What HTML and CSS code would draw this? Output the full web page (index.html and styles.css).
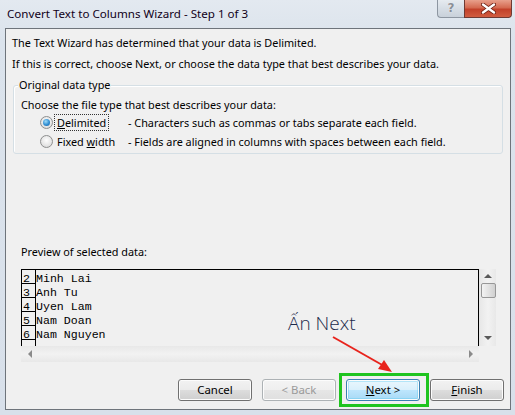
FILE: index.html
```html
<!DOCTYPE html>
<html>
<head>
<meta charset="utf-8">
<link rel="stylesheet" href="styles.css">
</head>
<body>
<div class="window">
  <div class="titlebar">
    <div class="title">Convert Text to Columns Wizard - Step 1 of 3</div>
    <div class="controls">
      <div class="btn-help">?</div>
      <div class="btn-close">
        <svg width="15" height="11" viewBox="0 0 15 11"><path d="M2 1.5 L13 9.5 M13 1.5 L2 9.5" stroke="#6b1d10" stroke-width="4" stroke-linecap="round"/><path d="M2 1.5 L13 9.5 M13 1.5 L2 9.5" stroke="#fff" stroke-width="2.4" stroke-linecap="round"/></svg>
      </div>
    </div>
  </div>
  <div class="client">
    <p class="msg first">The Text Wizard has determined that your data is Delimited.</p>
    <p class="msg">If this is correct, choose Next, or choose the data type that best describes your data.</p>
    <div class="group">
      <div class="legend">Original data type</div>
      <p class="choose">Choose the file type that best describes your data:</p>
      <div class="opt">
        <span class="radio checked"></span>
        <span class="lbl-cell"><span class="lbl focus"><u>D</u>elimited</span></span>
        <span class="desc">- Characters such as commas or tabs separate each field.</span>
      </div>
      <div class="opt">
        <span class="radio"></span>
        <span class="lbl-cell"><span class="lbl">Fixed <u>w</u>idth</span></span>
        <span class="desc">- Fields are aligned in columns with spaces between each field.</span>
      </div>
    </div>
    <p class="preview-label">Preview of selected data:</p>
    <div class="preview">
      <div class="data">
        <div class="row"><span class="num">2</span><span class="val">Minh Lai</span></div>
        <div class="row"><span class="num">3</span><span class="val">Anh Tu</span></div>
        <div class="row"><span class="num">4</span><span class="val">Uyen Lam</span></div>
        <div class="row"><span class="num">5</span><span class="val">Nam Doan</span></div>
        <div class="row"><span class="num">6</span><span class="val">Nam Nguyen</span></div>
        <div class="row"><span class="num"></span><span class="val"></span></div>
      </div>
      <div class="vscroll">
        <span class="arr up"></span>
        <span class="thumb"></span>
        <span class="arr down"></span>
      </div>
      <div class="hscroll">
        <span class="arr left"></span>
        <span class="arr right"></span>
      </div>
      <div class="corner"></div>
    </div>
    <div class="buttons">
      <div class="btn">Cancel</div>
      <div class="btn disabled">&lt; Back</div>
      <div class="btn default"><u>N</u>ext &gt;</div>
      <div class="btn"><u>F</u>inish</div>
    </div>
  </div>
  <div class="note">Ấn Next</div>
  <svg class="arrow" width="515" height="415" viewBox="0 0 515 415">
    <line x1="333" y1="337" x2="384" y2="366" stroke="#e8231c" stroke-width="2"/>
    <polygon points="392,372 378,369 384,360" fill="#e8231c"/>
  </svg>
  <div class="highlight"></div>
</div>
</body>
</html>
```

FILE: styles.css
```css
* { box-sizing: border-box; }
html, body { margin: 0; padding: 0; }
body {
  width: 515px;
  height: 415px;
  overflow: hidden;
  font-family: "Noto Sans", "Open Sans", sans-serif;
  font-size: 10.85px;
  color: #000;
}
.window {
  position: relative;
  width: 515px;
  height: 415px;
  background: linear-gradient(#e3e9f0, #dbe3ec 40px, #d8e0ea);
}
.titlebar {
  height: 28px;
  display: flex;
  justify-content: space-between;
  align-items: flex-start;
}
.title {
  padding: 6px 0 0 7px;
  font-size: 11.6px;
  line-height: 16px;
  color: #100018;
}
.controls {
  display: flex;
  margin-right: 3px;
}
.btn-help {
  width: 27px;
  height: 18px;
  border: 1px solid #8d96a1;
  border-top: none;
  border-right: none;
  border-radius: 0 0 0 4px;
  background: linear-gradient(#e6ebf0, #d6dde5 50%, #c9d1da);
  color: #8a8f96;
  font-family: "DejaVu Sans", sans-serif;
  font-weight: bold;
  font-size: 12px;
  line-height: 17px;
  text-align: center;
  text-shadow: 0 0 1px #fff;
}
.btn-close {
  width: 48px;
  height: 18px;
  border: 1px solid #6f3a33;
  border-top: none;
  border-radius: 0 0 4px 0;
  background: linear-gradient(#e8a08c, #d46a51 45%, #c2412a 55%, #d15c40);
  display: flex;
  align-items: center;
  justify-content: center;
}
.client {
  margin: 0 4px 0 5px;
  height: 382px;
  border: 1px solid #6e747b;
  background: #f0f0f0;
}
.msg {
  margin: 5px 0 0 6px;
  line-height: 16px;
  white-space: nowrap;
}
.msg.first { margin-top: 6px; }
.group {
  margin: 13px 7px 0 7px;
  height: 69px;
  border: 1px solid #d5dfe5;
  border-radius: 3px;
  box-shadow: inset 1px 1px 0 #fff;
}
.legend {
  display: table;
  margin: -9px 0 0 4px;
  padding: 0 1px;
  line-height: 16px;
  background: #f0f0f0;
}
.choose {
  margin: 4px 0 0 7px;
  line-height: 16px;
}
.opt {
  display: flex;
  align-items: center;
  height: 19px;
}
.radio {
  width: 13px;
  height: 13px;
  margin-left: 26px;
  border-radius: 50%;
  border: 1px solid #8e8f8f;
  background: radial-gradient(circle at 50% 40%, #fdfdfd, #e5e5e5 60%, #d2d2d2);
  position: relative;
  flex: none;
}
.radio.checked::after {
  content: "";
  position: absolute;
  left: 2px;
  top: 2px;
  width: 7px;
  height: 7px;
  border-radius: 50%;
  background: radial-gradient(circle at 40% 35%, #9fdcf9, #2f8dd2 55%, #1d5f9b);
}
.lbl-cell {
  width: 75px;
  flex: none;
  padding-left: 1px;
}
.lbl {
  display: inline-block;
  padding: 0 2px;
  line-height: 15px;
  border: 1px solid transparent;
  white-space: nowrap;
}
.lbl.focus {
  border: 1px dotted #333;
}
.desc {
  white-space: nowrap;
}
.preview-label {
  margin: 90px 0 0 15px;
  line-height: 16px;
}
.preview {
  margin: 9px 0 0 15px;
  width: 475px;
  display: grid;
  grid-template-columns: 458px 17px;
  grid-template-rows: 77px 16px;
}
.data {
  border: 1px solid #000;
  border-bottom: none;
  overflow: hidden;
  font-family: "Liberation Mono", "Courier New", monospace;
  font-size: 11.6px;
  background: #f0f0f0;
}
.row {
  display: flex;
  height: 14px;
}
.num, .val {
  height: 14px;
  padding-top: 5px;
  line-height: 8px;
}
.num {
  width: 14px;
  flex: none;
  border-right: 1px solid #000;
  border-bottom: 1px solid #000;
  text-align: right;
  padding-right: 5px;
}
.val {
  white-space: pre;
}
.vscroll {
  display: flex;
  flex-direction: column;
  align-items: center;
  background: linear-gradient(90deg, #e8e8e8, #f2f2f2 50%, #e8e8e8);
  border-left: 1px solid #e6e6e6;
}
.arr {
  width: 0;
  height: 0;
  border: 4px solid transparent;
}
.arr.up {
  margin-top: 5px;
  border-bottom: 4px solid #5a5a5a;
  border-top-width: 0;
}
.arr.down {
  margin-top: auto;
  margin-bottom: 6px;
  border-top: 4px solid #5a5a5a;
  border-bottom-width: 0;
}
.thumb {
  margin-top: 5px;
  width: 15px;
  height: 15px;
  border: 1px solid #979797;
  border-radius: 2px;
  background: linear-gradient(90deg, #f3f3f3, #e2e2e2 50%, #d0d0d0);
}
.hscroll {
  display: flex;
  align-items: center;
  justify-content: space-between;
  padding: 0 6px 0 7px;
  background: linear-gradient(#e8e8e8, #f2f2f2 50%, #e8e8e8);
}
.arr.left {
  border-right: 4px solid #8a8a8a;
  border-left-width: 0;
}
.arr.right {
  border-left: 4px solid #8a8a8a;
  border-right-width: 0;
}
.corner { background: #f0f0f0; }
.buttons {
  display: flex;
  justify-content: flex-end;
  gap: 10px;
  margin: 17px 6px 0 0;
}
.btn {
  width: 74px;
  height: 22px;
  border: 1px solid #707070;
  border-radius: 3px;
  background: linear-gradient(#f2f2f2, #ebebeb 50%, #dddddd 50%, #cfcfcf);
  box-shadow: inset 0 0 0 1px #fcfcfc;
  text-align: center;
  line-height: 20px;
  font-size: 11.4px;
}
.btn.disabled {
  color: #9a9a9a;
  border-color: #adb2b5;
  background: linear-gradient(#f4f4f4, #efefef 50%, #e6e6e6 50%, #dfdfdf);
}
.btn.default {
  border-color: #3c7fb1;
  background: linear-gradient(#eaf6fd, #d9f0fc 50%, #bee6fd 50%, #a7d9f5);
  box-shadow: inset 0 0 0 1px #fcfcfc, inset 0 0 0 2px #4cc7ef55;
}
.note {
  position: absolute;
  left: 288px;
  top: 310px;
  font-family: "Open Sans", "Noto Sans", sans-serif;
  font-weight: 300;
  font-size: 19px;
  line-height: 26px;
  color: #1b2a4a;
}
.arrow {
  position: absolute;
  left: 0;
  top: 0;
  pointer-events: none;
}
.highlight {
  position: absolute;
  left: 339px;
  top: 373px;
  width: 90px;
  height: 34px;
  border: 3px solid #1fc41f;
}
```
